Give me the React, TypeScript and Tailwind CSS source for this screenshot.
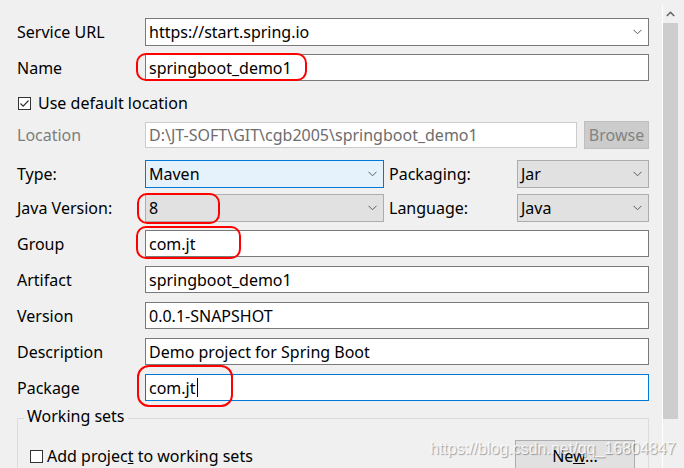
import React from "react";

const Chevron = () => (
    <svg width="9" height="6" viewBox="0 0 9 6" className="shrink-0">
        <path d="M0.5 0.8 L4.5 4.8 L8.5 0.8" fill="none" stroke="#5a5a5a" strokeWidth="1" />
    </svg>
);

const Label = ({ text, className = "" }: { text: string; className?: string }) => (
    <div className={`w-[128px] shrink-0 leading-none ${className}`}>{text}</div>
);

const TextBox = ({
    value,
    className = "",
    children,
}: {
    value: string;
    className?: string;
    children?: React.ReactNode;
}) => (
    <div
        className={`flex-1 flex items-center h-full border border-[#7a7a7a] bg-white pl-[3px] ${className}`}
    >
        <span className="leading-none">{value}</span>
        {children}
    </div>
);

const Combo = ({
    value,
    className = "",
}: {
    value: string;
    className?: string;
}) => (
    <div className={`flex items-center justify-between h-full border pl-[3px] pr-[6px] ${className}`}>
        <span className="leading-none">{value}</span>
        <Chevron />
    </div>
);

const CheckBox = ({ checked }: { checked: boolean }) => (
    <div className="w-[13px] h-[13px] border border-[#333] bg-white flex items-center justify-center shrink-0">
        {checked && (
            <svg width="11" height="11" viewBox="0 0 11 11">
                <path d="M1.5 5.5 L4.2 8.2 L9.5 2.5" fill="none" stroke="#333" strokeWidth="1.2" />
            </svg>
        )}
    </div>
);

export default function App() {
    return (
        <div
            className="relative w-[684px] h-[468px] overflow-hidden bg-[#f0f0f0] text-black text-[16px] flex"
            style={{ fontFamily: '"Noto Sans", "Open Sans", sans-serif' }}
        >
            <div className="w-[662px] shrink-0 pl-[17px] pr-[13px] pt-[18px] flex flex-col">
                <div className="flex shrink-0 items-center h-[28px]">
                    <Label text="Service URL" />
                    <Combo value="https://start.spring.io" className="flex-1 bg-white border-[#7a7a7a]" />
                </div>
                <div className="flex shrink-0 items-center h-[27px] mt-[8px]">
                    <Label text="Name" />
                    <TextBox value="springboot_demo1" />
                </div>
                <div className="flex shrink-0 items-center h-[26px] mt-[9px] pl-px gap-[7px]">
                    <CheckBox checked />
                    <span className="leading-none">Use default location</span>
                </div>
                <div className="flex shrink-0 items-center h-[26px] mt-[6px]">
                    <Label text="Location" className="text-[#7d7d7d]" />
                    <TextBox
                        value="D:\JT-SOFT\GIT\cgb2005\springboot_demo1"
                        className="border-[#cccccc] bg-[#f0f0f0] text-[#6d6d6d]"
                    />
                    <div className="ml-[7px] w-[65px] h-[28px] bg-[#cccccc] border border-[#bfbfbf] text-[#838383] flex items-center justify-center leading-none">
                        Browse
                    </div>
                </div>
                <div className="flex shrink-0 items-center h-[28px] mt-[12px]">
                    <Label text="Type:" />
                    <Combo value="Maven" className="w-[239px] bg-[#e5f1fb] border-[#0078d7]" />
                    <div className="w-[133px] pl-[5px] leading-none">Packaging:</div>
                    <Combo value="Jar" className="flex-1 bg-[#e1e1e1] border-[#adadad]" />
                </div>
                <div className="flex shrink-0 items-center h-[28px] mt-[6px]">
                    <Label text="Java Version:" />
                    <Combo value="8" className="w-[239px] bg-[#e1e1e1] border-[#adadad]" />
                    <div className="w-[133px] pl-[5px] leading-none">Language:</div>
                    <Combo value="Java" className="flex-1 bg-[#e1e1e1] border-[#adadad]" />
                </div>
                <div className="flex shrink-0 items-center h-[27px] mt-[8px]">
                    <Label text="Group" />
                    <TextBox value="com.jt" />
                </div>
                <div className="flex shrink-0 items-center h-[27px] mt-[9px]">
                    <Label text="Artifact" />
                    <TextBox value="springboot_demo1" />
                </div>
                <div className="flex shrink-0 items-center h-[27px] mt-[9px]">
                    <Label text="Version" />
                    <TextBox value="0.0.1-SNAPSHOT" />
                </div>
                <div className="flex shrink-0 items-center h-[27px] mt-[9px]">
                    <Label text="Description" />
                    <TextBox value="Demo project for Spring Boot" />
                </div>
                <div className="flex shrink-0 items-center h-[27px] mt-[9px]">
                    <Label text="Package" />
                    <TextBox value="com.jt" className="border-[#0078d7]">
                        <span className="ml-px w-px h-[19px] bg-black" />
                    </TextBox>
                </div>
                <div className="relative shrink-0 mt-[17px] h-[70px] border-t border-l border-r border-[#dcdcdc]">
                    <div className="absolute left-[6px] top-[-11px] px-[3px] bg-[#f0f0f0] leading-none">
                        Working sets
                    </div>
                    <div className="flex items-start justify-between pt-[21px] pl-[12px] pr-[13px]">
                        <div className="flex items-center gap-[4px] mt-[8px]">
                            <CheckBox checked={false} />
                            <span className="leading-none">
                                Add projec<span className="underline">t</span> to working sets
                            </span>
                        </div>
                        <div className="w-[120px] h-[40px] bg-[#e1e1e1] border border-[#adadad] flex justify-center pt-[7px] leading-none">
                            <span>
                                Ne<span className="underline">w</span>...
                            </span>
                        </div>
                    </div>
                </div>
            </div>
            <div className="w-px bg-white mt-[5px]" />
            <div className="flex-1 flex flex-col items-start mt-[5px]">
                <div className="w-[15px] h-[18px] flex items-center justify-center">
                    <svg width="9" height="6" viewBox="0 0 9 6">
                        <path d="M0.8 5 L4.5 1.3 L8.2 5" fill="none" stroke="#606060" strokeWidth="1.5" />
                    </svg>
                </div>
                <div className="w-[15px] h-[396px] bg-[#cdcdcd]" />
            </div>

            <div className="absolute left-[136px] top-[53px] w-[171px] h-[28px] border-[2.5px] border-[#f00] rounded-[10px]" />
            <div className="absolute left-[137px] top-[193px] w-[83px] h-[31px] border-[2.5px] border-[#f00] rounded-[10px]" />
            <div className="absolute left-[136px] top-[226px] w-[105px] h-[33px] border-[2.5px] border-[#f00] rounded-[10px]" />
            <div className="absolute left-[137px] top-[365px] w-[96px] h-[42px] border-[2.5px] border-[#f00] rounded-[12px]" />

            <div
                className="absolute left-[430px] top-[441px] text-[16px] text-white/80 leading-none whitespace-nowrap"
                style={{
                    fontFamily: '"Liberation Sans", Arial, sans-serif',
                    textShadow: "1px 1px 1px rgba(0,0,0,0.35)",
                }}
            >
                https://blog.csdn.net/qq_16804847
            </div>
        </div>
    );
}
